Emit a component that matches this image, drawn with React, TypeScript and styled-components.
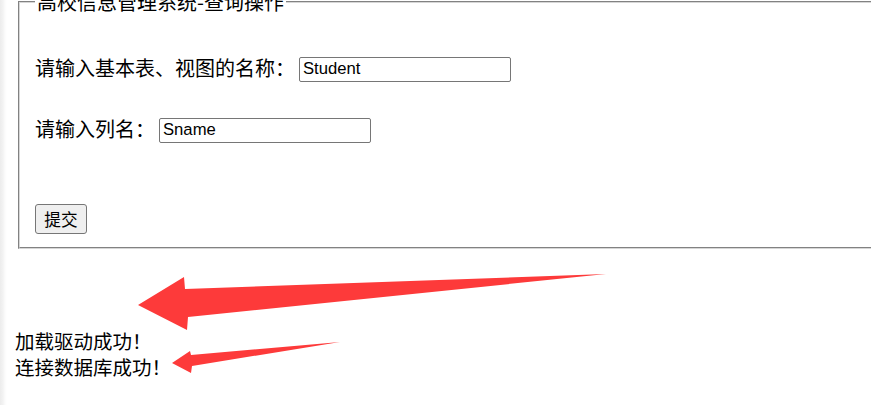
import React from 'react';
import styled, { createGlobalStyle } from 'styled-components';

const cjkFont = `"Noto Sans CJK SC", "Microsoft YaHei", sans-serif`;
const latinFont = `"Liberation Sans", Arial, "Noto Sans CJK SC", sans-serif`;

const GlobalStyle = createGlobalStyle`
    html, body {
        margin: 0;
        padding: 0;
        overflow: hidden;
        width: 871px;
        height: 405px;
    }
    body {
        background: linear-gradient(to right, #ececec 0, #f3f3f3 3px, #fbfbfb 5px, #fff 7px);
        color: #000;
        font-family: ${cjkFont};
    }
`;

const Page = styled.div`
    position: relative;
    width: 871px;
    height: 405px;
    overflow: hidden;
`;

const Content = styled.div`
    display: flex;
    flex-direction: column;
    margin-top: -10px;
    padding-left: 18px;
`;

const QueryFieldset = styled.fieldset`
    width: 860px;
    box-sizing: border-box;
    margin: 0;
    padding: 0 15px 13px 15px;
    border: 2px groove #d6d6d6;
    min-width: 0;
`;

const Legend = styled.legend`
    padding: 0 2px;
    font-size: 20px;
    line-height: 24px;
    font-family: ${cjkFont};
`;

const FormBody = styled.div`
    display: flex;
    flex-direction: column;
    padding-top: 39px;
`;

const FieldRow = styled.label<{ $gap?: number }>`
    display: flex;
    align-items: center;
    height: 30px;
    margin-top: ${props => props.$gap || 0}px;
    font-size: 20px;
    gap: 4px;
`;

const LabelText = styled.span`
    line-height: 30px;
    white-space: nowrap;
`;

const TextInput = styled.input`
    box-sizing: border-box;
    width: 212px;
    height: 25px;
    margin: 2px 0 0 0;
    padding: 1px 3px;
    border: 1px solid #767676;
    border-radius: 2px;
    font-family: ${latinFont};
    font-size: 16.67px;
    color: #000;
    background: #fff;
    outline: none;
`;

const ButtonRow = styled.div`
    display: flex;
    margin-top: 60px;
`;

const SubmitButton = styled.button`
    box-sizing: border-box;
    height: 30px;
    width: 52px;
    padding: 0;
    border: 1px solid #767676;
    border-radius: 3px;
    background: #efefef;
    font-family: ${cjkFont};
    font-size: 16.67px;
    color: #000;
    line-height: 1;
`;

const Messages = styled.div`
    display: flex;
    flex-direction: column;
    margin: 79px 0 0 -3px;
    font-size: 19.5px;
    line-height: 26px;
`;

const ArrowLayer = styled.svg`
    position: absolute;
    left: 0;
    top: 0;
    pointer-events: none;
`;

const arrowRed = '#fd3a3a';

const App = () => {
    return (
        <Page>
            <GlobalStyle />
            <Content>
                <QueryFieldset>
                    <Legend>高校信息管理系统-查询操作</Legend>
                    <FormBody>
                        <FieldRow>
                            <LabelText>请输入基本表、视图的名称：</LabelText>
                            <TextInput type="text" defaultValue="Student" />
                        </FieldRow>
                        <FieldRow $gap={31}>
                            <LabelText>请输入列名：</LabelText>
                            <TextInput type="text" defaultValue="Sname" />
                        </FieldRow>
                        <ButtonRow>
                            <SubmitButton type="submit">提交</SubmitButton>
                        </ButtonRow>
                    </FormBody>
                </QueryFieldset>
                <Messages>
                    <span>加载驱动成功！</span>
                    <span>连接数据库成功！</span>
                </Messages>
            </Content>
            <ArrowLayer width="871" height="405" viewBox="0 0 871 405">
                <polygon
                    fill={arrowRed}
                    points="138,305 184,277 185,289 606,274 188,317 187,330"
                />
                <polygon
                    fill={arrowRed}
                    points="172,363 190,351 191,355 340,342 192,366 191,373"
                />
            </ArrowLayer>
        </Page>
    );
};

export default App;
